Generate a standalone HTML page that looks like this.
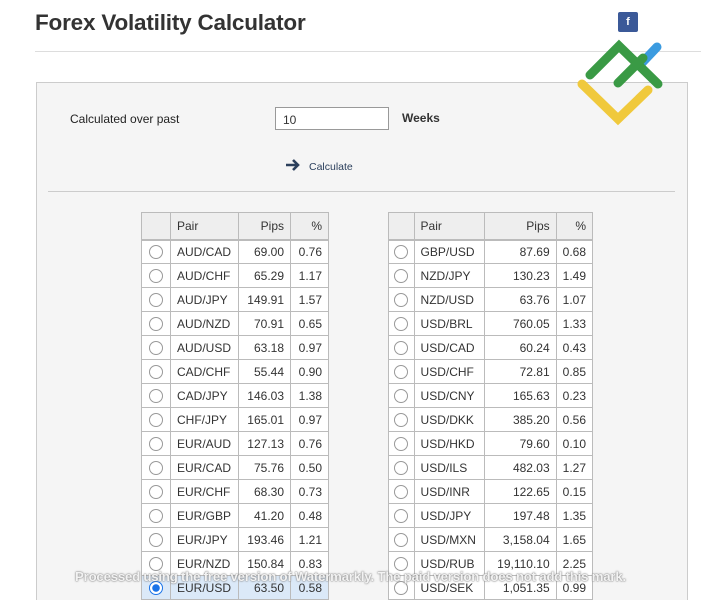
<!DOCTYPE html>
<html><head><meta charset="utf-8"><style>
*{margin:0;padding:0;box-sizing:border-box}
html{overflow:hidden;height:600px}
body{width:701px;height:600px;overflow:hidden;background:#fff;font-family:"Liberation Sans",Arial,sans-serif;position:relative;color:#333}
h1{position:absolute;left:35px;top:10px;font-size:22.5px;font-weight:bold;color:#333;letter-spacing:-0.2px}
.hr{position:absolute;left:35px;top:51px;width:666px;height:1px;background:#ddd}
.fb{position:absolute;left:618px;top:12px;width:20px;height:20px;background:#3b5998;color:#fff;font-size:11px;font-weight:bold;text-align:center;line-height:20px;border-radius:2px}
.panel{position:absolute;left:36px;top:82px;width:652px;height:530px;background:#f5f5f5;border:1px solid #ccc}
.lbl{position:absolute;left:70px;top:112px;font-size:12px;color:#222}
.inp{position:absolute;left:275px;top:107px;width:114px;height:23px;border:1px solid #999;background:#fff;font-size:12px;padding:5px 7px}
.wk{position:absolute;left:402px;top:111px;font-size:12px;font-weight:bold;color:#333}
.calc{position:absolute;left:285px;top:158px;font-size:10.5px;color:#2b3f5c}
.calc span{margin-left:8px;position:relative;top:-2px}
.hr2{position:absolute;left:48px;top:191px;width:627px;height:1px;background:#ccc}
table{position:absolute;border-collapse:collapse;font-size:12px;background:#fff}
td,th{border:1px solid #bbb;height:24px;padding:0 6px;font-weight:normal;color:#333}
th{background:#eee;height:27px;border-bottom:2px solid #bbb;text-align:left}
th.r,td.r{text-align:right}
.rad{display:inline-block;width:14px;height:14px;border:1px solid #999;border-radius:50%;background:#fff;vertical-align:middle}
.sel td{background:#dbe9f8}
.sel .rad{border-color:#1a73e8;background:radial-gradient(circle,#1a73e8 0 3.5px,#fff 4px)}
td.c{text-align:center;padding:0}
.wm{position:absolute;left:0;width:701px;top:569px;text-align:center;font-size:13.2px;font-weight:bold;color:rgba(255,255,255,.9);text-shadow:0 0 2px #888,0 0 1px #666;letter-spacing:-0.2px}
</style></head><body>
<h1>Forex Volatility Calculator</h1>
<div class="hr"></div>
<div class="fb">f</div>
<div class="panel"></div>
<svg style="position:absolute;left:0;top:0" width="701" height="200"><g fill="none" stroke-linecap="round" stroke-width="9">
<path d="M582 84 L618 119 L648 90" stroke="#f0c93c"/>
<path d="M657 47 L639 66" stroke="#3b9be0"/>
<path d="M590 75 L619 46 L658 84" stroke="#3a9a45"/>
<path d="M618 83 L643 58" stroke="#3a9a45"/>
</g></svg>
<div class="lbl">Calculated over past</div>
<div class="inp">10</div>
<div class="wk">Weeks</div>
<div class="calc"><svg width="16" height="14" viewBox="0 0 16 14"><path d="M1 7H13M8 2L13 7L8 12" stroke="#2b3f5c" stroke-width="2.6" fill="none"/></svg><span>Calculate</span></div>
<div class="hr2"></div>
<table style="left:141px;top:212px;width:188px">
<tr><th style="width:29px"></th><th style="width:68px">Pair</th><th class="r" style="width:52px">Pips</th><th class="r">%</th></tr>
<tr><td class="c"><i class="rad"></i></td><td>AUD/CAD</td><td class="r">69.00</td><td class="r">0.76</td></tr>
<tr><td class="c"><i class="rad"></i></td><td>AUD/CHF</td><td class="r">65.29</td><td class="r">1.17</td></tr>
<tr><td class="c"><i class="rad"></i></td><td>AUD/JPY</td><td class="r">149.91</td><td class="r">1.57</td></tr>
<tr><td class="c"><i class="rad"></i></td><td>AUD/NZD</td><td class="r">70.91</td><td class="r">0.65</td></tr>
<tr><td class="c"><i class="rad"></i></td><td>AUD/USD</td><td class="r">63.18</td><td class="r">0.97</td></tr>
<tr><td class="c"><i class="rad"></i></td><td>CAD/CHF</td><td class="r">55.44</td><td class="r">0.90</td></tr>
<tr><td class="c"><i class="rad"></i></td><td>CAD/JPY</td><td class="r">146.03</td><td class="r">1.38</td></tr>
<tr><td class="c"><i class="rad"></i></td><td>CHF/JPY</td><td class="r">165.01</td><td class="r">0.97</td></tr>
<tr><td class="c"><i class="rad"></i></td><td>EUR/AUD</td><td class="r">127.13</td><td class="r">0.76</td></tr>
<tr><td class="c"><i class="rad"></i></td><td>EUR/CAD</td><td class="r">75.76</td><td class="r">0.50</td></tr>
<tr><td class="c"><i class="rad"></i></td><td>EUR/CHF</td><td class="r">68.30</td><td class="r">0.73</td></tr>
<tr><td class="c"><i class="rad"></i></td><td>EUR/GBP</td><td class="r">41.20</td><td class="r">0.48</td></tr>
<tr><td class="c"><i class="rad"></i></td><td>EUR/JPY</td><td class="r">193.46</td><td class="r">1.21</td></tr>
<tr><td class="c"><i class="rad"></i></td><td>EUR/NZD</td><td class="r">150.84</td><td class="r">0.83</td></tr>
<tr class="sel"><td class="c"><i class="rad"></i></td><td>EUR/USD</td><td class="r">63.50</td><td class="r">0.58</td></tr>
</table>
<table style="left:388px;top:212px;width:205px">
<tr><th style="width:28px"></th><th style="width:71px">Pair</th><th class="r" style="width:73px">Pips</th><th class="r">%</th></tr>
<tr><td class="c"><i class="rad"></i></td><td>GBP/USD</td><td class="r">87.69</td><td class="r">0.68</td></tr>
<tr><td class="c"><i class="rad"></i></td><td>NZD/JPY</td><td class="r">130.23</td><td class="r">1.49</td></tr>
<tr><td class="c"><i class="rad"></i></td><td>NZD/USD</td><td class="r">63.76</td><td class="r">1.07</td></tr>
<tr><td class="c"><i class="rad"></i></td><td>USD/BRL</td><td class="r">760.05</td><td class="r">1.33</td></tr>
<tr><td class="c"><i class="rad"></i></td><td>USD/CAD</td><td class="r">60.24</td><td class="r">0.43</td></tr>
<tr><td class="c"><i class="rad"></i></td><td>USD/CHF</td><td class="r">72.81</td><td class="r">0.85</td></tr>
<tr><td class="c"><i class="rad"></i></td><td>USD/CNY</td><td class="r">165.63</td><td class="r">0.23</td></tr>
<tr><td class="c"><i class="rad"></i></td><td>USD/DKK</td><td class="r">385.20</td><td class="r">0.56</td></tr>
<tr><td class="c"><i class="rad"></i></td><td>USD/HKD</td><td class="r">79.60</td><td class="r">0.10</td></tr>
<tr><td class="c"><i class="rad"></i></td><td>USD/ILS</td><td class="r">482.03</td><td class="r">1.27</td></tr>
<tr><td class="c"><i class="rad"></i></td><td>USD/INR</td><td class="r">122.65</td><td class="r">0.15</td></tr>
<tr><td class="c"><i class="rad"></i></td><td>USD/JPY</td><td class="r">197.48</td><td class="r">1.35</td></tr>
<tr><td class="c"><i class="rad"></i></td><td>USD/MXN</td><td class="r">3,158.04</td><td class="r">1.65</td></tr>
<tr><td class="c"><i class="rad"></i></td><td>USD/RUB</td><td class="r">19,110.10</td><td class="r">2.25</td></tr>
<tr><td class="c"><i class="rad"></i></td><td>USD/SEK</td><td class="r">1,051.35</td><td class="r">0.99</td></tr>
</table>
<div class="wm">Processed using the free version of Watermarkly. The paid version does not add this mark.</div>
</body></html>
